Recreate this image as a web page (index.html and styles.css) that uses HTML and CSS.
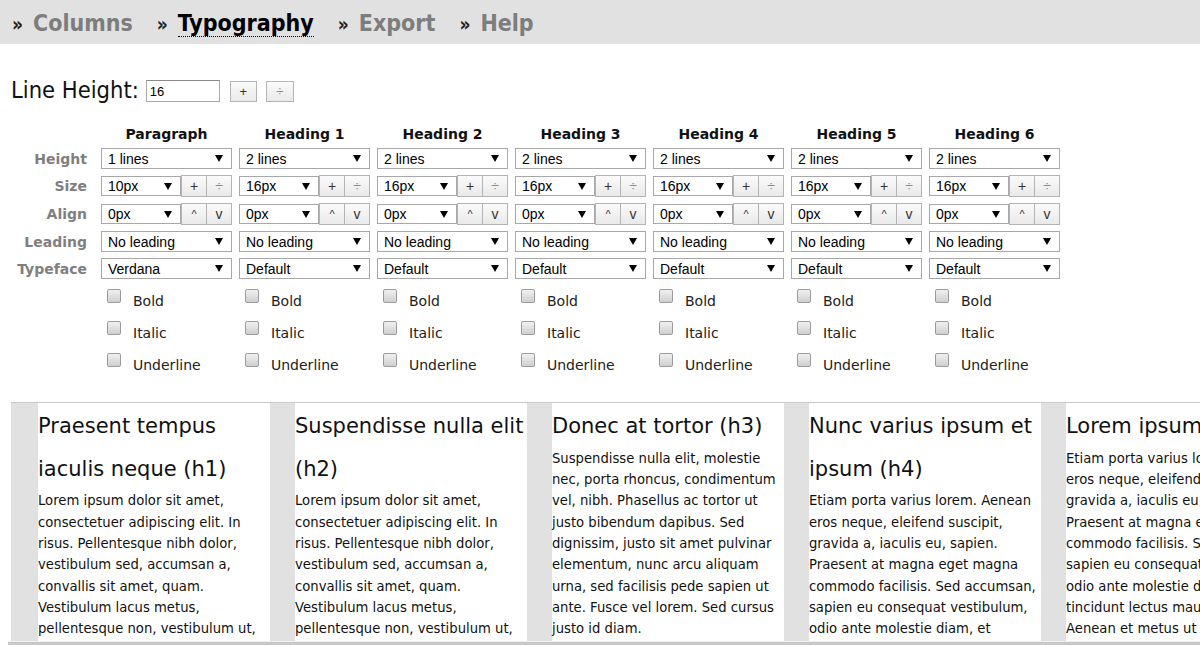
FILE: index.html
```html
<!DOCTYPE html>
<html>
<head>
<meta charset="utf-8">
<title>Typography</title>
<link rel="stylesheet" href="styles.css">
</head>
<body>
<nav class="tabs">
  <a class="tab"><span class="raquo">»</span><span class="tab-text">Columns</span></a>
  <a class="tab active"><span class="raquo">»</span><span class="tab-text">Typography</span></a>
  <a class="tab"><span class="raquo">»</span><span class="tab-text">Export</span></a>
  <a class="tab"><span class="raquo">»</span><span class="tab-text">Help</span></a>
</nav>

<div class="lh-row">
  <label class="lh-label">Line Height:</label>
  <input class="lh-input" type="text" value="16">
  <button class="btn lh-btn">+</button>
  <button class="btn lh-btn lh-btn2">÷</button>
</div>

<div class="controls">
  <div></div>
  <div class="col-head">Paragraph</div>
  <div class="col-head">Heading 1</div>
  <div class="col-head">Heading 2</div>
  <div class="col-head">Heading 3</div>
  <div class="col-head">Heading 4</div>
  <div class="col-head">Heading 5</div>
  <div class="col-head">Heading 6</div>

  <div class="row-label">Height</div>
  <div class="sel"><span>1 lines</span><i class="arrow"></i></div>
  <div class="sel"><span>2 lines</span><i class="arrow"></i></div>
  <div class="sel"><span>2 lines</span><i class="arrow"></i></div>
  <div class="sel"><span>2 lines</span><i class="arrow"></i></div>
  <div class="sel"><span>2 lines</span><i class="arrow"></i></div>
  <div class="sel"><span>2 lines</span><i class="arrow"></i></div>
  <div class="sel"><span>2 lines</span><i class="arrow"></i></div>

  <div class="row-label">Size</div>
  <div class="combo"><div class="sel"><span>10px</span><i class="arrow"></i></div><button class="btn cbtn">+</button><button class="btn cbtn div">÷</button></div>
  <div class="combo"><div class="sel"><span>16px</span><i class="arrow"></i></div><button class="btn cbtn">+</button><button class="btn cbtn div">÷</button></div>
  <div class="combo"><div class="sel"><span>16px</span><i class="arrow"></i></div><button class="btn cbtn">+</button><button class="btn cbtn div">÷</button></div>
  <div class="combo"><div class="sel"><span>16px</span><i class="arrow"></i></div><button class="btn cbtn">+</button><button class="btn cbtn div">÷</button></div>
  <div class="combo"><div class="sel"><span>16px</span><i class="arrow"></i></div><button class="btn cbtn">+</button><button class="btn cbtn div">÷</button></div>
  <div class="combo"><div class="sel"><span>16px</span><i class="arrow"></i></div><button class="btn cbtn">+</button><button class="btn cbtn div">÷</button></div>
  <div class="combo"><div class="sel"><span>16px</span><i class="arrow"></i></div><button class="btn cbtn">+</button><button class="btn cbtn div">÷</button></div>

  <div class="row-label">Align</div>
  <div class="combo"><div class="sel"><span>0px</span><i class="arrow"></i></div><button class="btn cbtn up">^</button><button class="btn cbtn">v</button></div>
  <div class="combo"><div class="sel"><span>0px</span><i class="arrow"></i></div><button class="btn cbtn up">^</button><button class="btn cbtn">v</button></div>
  <div class="combo"><div class="sel"><span>0px</span><i class="arrow"></i></div><button class="btn cbtn up">^</button><button class="btn cbtn">v</button></div>
  <div class="combo"><div class="sel"><span>0px</span><i class="arrow"></i></div><button class="btn cbtn up">^</button><button class="btn cbtn">v</button></div>
  <div class="combo"><div class="sel"><span>0px</span><i class="arrow"></i></div><button class="btn cbtn up">^</button><button class="btn cbtn">v</button></div>
  <div class="combo"><div class="sel"><span>0px</span><i class="arrow"></i></div><button class="btn cbtn up">^</button><button class="btn cbtn">v</button></div>
  <div class="combo"><div class="sel"><span>0px</span><i class="arrow"></i></div><button class="btn cbtn up">^</button><button class="btn cbtn">v</button></div>

  <div class="row-label">Leading</div>
  <div class="sel"><span>No leading</span><i class="arrow"></i></div>
  <div class="sel"><span>No leading</span><i class="arrow"></i></div>
  <div class="sel"><span>No leading</span><i class="arrow"></i></div>
  <div class="sel"><span>No leading</span><i class="arrow"></i></div>
  <div class="sel"><span>No leading</span><i class="arrow"></i></div>
  <div class="sel"><span>No leading</span><i class="arrow"></i></div>
  <div class="sel"><span>No leading</span><i class="arrow"></i></div>

  <div class="row-label">Typeface</div>
  <div class="sel"><span>Verdana</span><i class="arrow"></i></div>
  <div class="sel"><span>Default</span><i class="arrow"></i></div>
  <div class="sel"><span>Default</span><i class="arrow"></i></div>
  <div class="sel"><span>Default</span><i class="arrow"></i></div>
  <div class="sel"><span>Default</span><i class="arrow"></i></div>
  <div class="sel"><span>Default</span><i class="arrow"></i></div>
  <div class="sel"><span>Default</span><i class="arrow"></i></div>

  <div></div>
  <div class="checks"><label class="chk"><input type="checkbox"><span>Bold</span></label><label class="chk"><input type="checkbox"><span>Italic</span></label><label class="chk"><input type="checkbox"><span>Underline</span></label></div>
  <div class="checks"><label class="chk"><input type="checkbox"><span>Bold</span></label><label class="chk"><input type="checkbox"><span>Italic</span></label><label class="chk"><input type="checkbox"><span>Underline</span></label></div>
  <div class="checks"><label class="chk"><input type="checkbox"><span>Bold</span></label><label class="chk"><input type="checkbox"><span>Italic</span></label><label class="chk"><input type="checkbox"><span>Underline</span></label></div>
  <div class="checks"><label class="chk"><input type="checkbox"><span>Bold</span></label><label class="chk"><input type="checkbox"><span>Italic</span></label><label class="chk"><input type="checkbox"><span>Underline</span></label></div>
  <div class="checks"><label class="chk"><input type="checkbox"><span>Bold</span></label><label class="chk"><input type="checkbox"><span>Italic</span></label><label class="chk"><input type="checkbox"><span>Underline</span></label></div>
  <div class="checks"><label class="chk"><input type="checkbox"><span>Bold</span></label><label class="chk"><input type="checkbox"><span>Italic</span></label><label class="chk"><input type="checkbox"><span>Underline</span></label></div>
  <div class="checks"><label class="chk"><input type="checkbox"><span>Bold</span></label><label class="chk"><input type="checkbox"><span>Italic</span></label><label class="chk"><input type="checkbox"><span>Underline</span></label></div>
</div>

<div class="preview">
  <div class="pcol">
    <h1>Praesent tempus iaculis neque (h1)</h1>
    <p>Lorem ipsum dolor sit amet, consectetuer adipiscing elit. In risus. Pellentesque nibh dolor, vestibulum sed, accumsan a, convallis sit amet, quam. Vestibulum lacus metus, pellentesque non, vestibulum ut, sapien. Donec ac tortor.</p>
  </div>
  <div class="pcol">
    <h2>Suspendisse nulla elit (h2)</h2>
    <p>Lorem ipsum dolor sit amet, consectetuer adipiscing elit. In risus. Pellentesque nibh dolor, vestibulum sed, accumsan a, convallis sit amet, quam. Vestibulum lacus metus, pellentesque non, vestibulum ut, sapien. Donec ac tortor.</p>
  </div>
  <div class="pcol">
    <h3>Donec at tortor (h3)</h3>
    <p>Suspendisse nulla elit, molestie nec, porta rhoncus, condimentum vel, nibh. Phasellus ac tortor ut justo bibendum dapibus. Sed dignissim, justo sit amet pulvinar elementum, nunc arcu aliquam urna, sed facilisis pede sapien ut ante. Fusce vel lorem. Sed cursus justo id diam.</p>
  </div>
  <div class="pcol">
    <h4>Nunc varius ipsum et ipsum (h4)</h4>
    <p>Etiam porta varius lorem. Aenean eros neque, eleifend suscipit, gravida a, iaculis eu, sapien. Praesent at magna eget magna commodo facilisis. Sed accumsan, sapien eu consequat vestibulum, odio ante molestie diam, et tincidunt lectus mauris eu nisl.</p>
  </div>
  <div class="pcol">
    <h5>Lorem ipsum (h5)</h5>
    <p>Etiam porta varius lorem. Aenean eros neque, eleifend suscipit, gravida a, iaculis eu, sapien. Praesent at magna eget magna commodo facilisis. Sed accumsan, sapien eu consequat vestibulum, odio ante molestie diam, et tincidunt lectus mauris eu nisl. Aenean et metus ut lorem.</p>
  </div>
</div>
<div class="hscroll"></div>
</body>
</html>
```

FILE: styles.css
```css
html, body {
  margin: 0;
  padding: 0;
  background: #fff;
}
body {
  font-family: "DejaVu Sans", Verdana, sans-serif;
  color: #000;
  overflow: hidden;
}

/* ---------- top tabs ---------- */
.tabs {
  display: flex;
  align-items: center;
  gap: 24px;
  height: 44px;
  box-sizing: border-box;
  padding: 2px 0 0 12px;
  background: #e1e1e1;
  font-family: "DejaVu Sans Condensed", "DejaVu Sans", sans-serif;
  font-weight: bold;
  font-size: 23px;
}
.tab {
  display: flex;
  align-items: baseline;
  color: #7d7d7d;
  text-decoration: none;
}
.raquo {
  width: 21px;
  font-size: 19px;
  color: #222;
}
.tab.active .tab-text {
  color: #000;
  border-bottom: 1px dotted #000;
}

/* ---------- line height row ---------- */
.lh-row {
  display: flex;
  align-items: center;
  height: 26px;
  margin-top: 34px;
  padding-left: 11px;
}
.lh-label {
  font-family: "DejaVu Sans Condensed", "DejaVu Sans", sans-serif;
  font-size: 23.5px;
  color: #111;
  margin-right: 7px;
  margin-bottom: 3px;
}
.lh-input {
  width: 74px;
  height: 22px;
  box-sizing: border-box;
  border: 1px solid #a9a9a9;
  border-top-color: #8a8a8a;
  padding: 0 3px;
  margin: 0 10px 0 0;
  font-family: "Liberation Sans", Arial, sans-serif;
  font-size: 13px;
  color: #000;
  outline: none;
}
.btn {
  margin: 0;
  padding: 0;
  box-sizing: border-box;
  border: 1px solid #b4b4b4;
  border-radius: 0;
  background: linear-gradient(#fbfbfb, #e9e9e9);
  font-family: "Liberation Sans", Arial, sans-serif;
  font-size: 13px;
  color: #333;
  cursor: pointer;
}
.lh-btn {
  width: 27px;
  height: 21px;
  margin-right: 9px;
}
.lh-btn2 {
  width: 28px;
  color: #888;
}

/* ---------- controls grid ---------- */
.controls {
  display: grid;
  grid-template-columns: 94px repeat(7, 131px);
  grid-template-rows: 16px 21px 22px 22px 21px 21px auto;
  column-gap: 7px;
  row-gap: 6px;
  margin-top: 22px;
}
.col-head {
  text-align: center;
  font-weight: bold;
  font-size: 14px;
  line-height: 16px;
  color: #111;
}
.row-label {
  align-self: center;
  text-align: right;
  padding-right: 7px;
  font-weight: bold;
  font-size: 14px;
  line-height: 16px;
  color: #7f7f7f;
}
.sel {
  display: flex;
  align-items: center;
  height: 21px;
  box-sizing: border-box;
  border: 1px solid #a8a8a8;
  background: #fff;
  padding: 0 8px 0 6px;
  font-family: "Liberation Sans", Arial, sans-serif;
  font-size: 14px;
  color: #000;
}
.sel span {
  flex: 1;
  white-space: nowrap;
}
.arrow {
  width: 0;
  height: 0;
  border-left: 4px solid transparent;
  border-right: 4px solid transparent;
  border-top: 7px solid #000;
}
.combo {
  display: flex;
  align-items: center;
}
.combo .sel {
  flex: none;
  width: 80px;
  height: 20px;
}
.cbtn {
  flex: none;
  width: 26px;
  height: 22px;
  font-size: 14px;
}
.cbtn + .cbtn {
  margin-left: -1px;
}
.cbtn.div {
  color: #8a8a8a;
}
.cbtn.up {
  font-size: 11px;
}

/* ---------- checkboxes ---------- */
.checks {
  display: flex;
  flex-direction: column;
  padding-left: 6px;
}
.chk {
  display: flex;
  align-items: flex-start;
  height: 32px;
}
.chk input {
  appearance: none;
  -webkit-appearance: none;
  flex: none;
  width: 14px;
  height: 14px;
  box-sizing: border-box;
  margin: 4px 12px 0 0;
  border: 1px solid #9c9c9c;
  border-radius: 2px;
  background: linear-gradient(#f0f0f0, #cfcfcf);
}
.chk span {
  font-size: 14px;
  line-height: 18px;
  padding-top: 7px;
  color: #222;
}

/* ---------- preview ---------- */
.preview {
  display: flex;
  gap: 25px;
  height: 238px;
  margin: 21px 0 0 11px;
  padding-left: 27px;
  border-top: 1px solid #c9c9c9;
  background: #e1e1e1;
  overflow: hidden;
}
.pcol {
  flex: 0 0 232px;
  padding-top: 2px;
  background: #fff;
}
.pcol h1, .pcol h2, .pcol h3, .pcol h4, .pcol h5 {
  margin: 0;
  font-weight: normal;
  font-size: 21px;
  line-height: 42.67px;
  color: #111;
}
.pcol p {
  margin: 0;
  font-size: 13.2px;
  line-height: 21.33px;
  color: #111;
}
.hscroll {
  height: 4px;
  margin-left: 8px;
  border-top: 1px solid #efefef;
  background: #c8c8c8;
}
```
